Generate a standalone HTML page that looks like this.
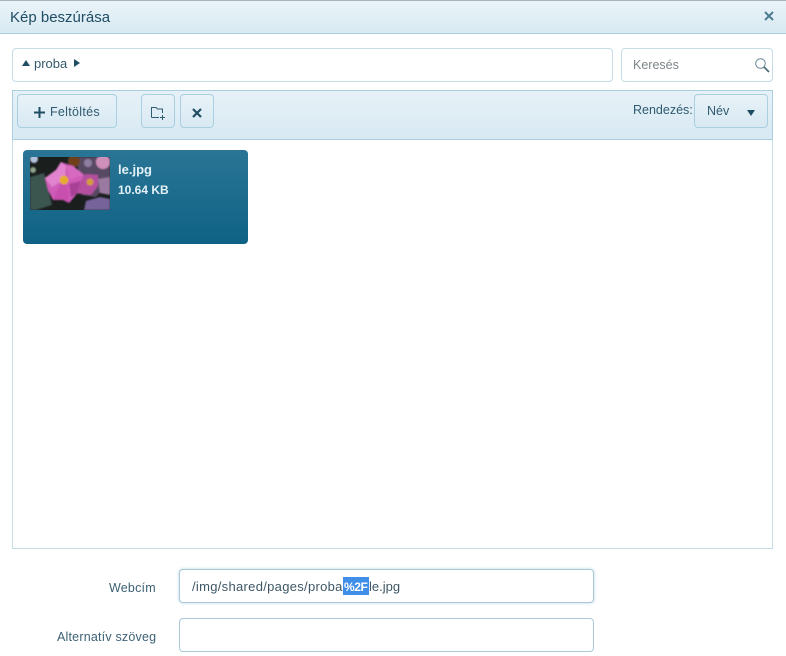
<!DOCTYPE html>
<html><head><meta charset="utf-8"><style>
html,body{margin:0;padding:0;background:#fff}
body{width:786px;height:656px;position:relative;overflow:hidden;font-family:"Liberation Sans",sans-serif;color:#2a4f63}
.a{position:absolute;box-sizing:border-box}
.t{position:absolute;white-space:nowrap;line-height:16px}
.btn{position:absolute;box-sizing:border-box;border:1px solid #a9cfe0;border-radius:4px;background:linear-gradient(#e8f2f8,#d8e9f2)}
.inp{position:absolute;box-sizing:border-box;border:1px solid #c6dde8;border-radius:4px;background:#fff}
</style></head><body>
<div class="a" style="left:0;top:0;width:786px;height:34px;background:linear-gradient(#e9f3f8,#d9eaf3);border-top:1px solid #a9b4ba;border-bottom:1px solid #a9cfe0"></div>
<div class="t" style="left:10px;top:10px;font-size:15px;color:#1f4d63">Kép beszúrása</div>
<svg class="a" style="left:764px;top:11px" width="10" height="10" viewBox="0 0 10 10"><path d="M1 1L9 9M9 1L1 9" stroke="#4f7d92" stroke-width="2"/></svg>

<div class="inp" style="left:12px;top:48px;width:601px;height:34px"></div>
<svg class="a" style="left:22px;top:60px" width="8" height="6"><path d="M0 6L4 0L8 6Z" fill="#1f4d63"/></svg>
<div class="t" style="left:34px;top:56px;font-size:13px;color:#335a6e">proba</div>
<svg class="a" style="left:74px;top:59px" width="6" height="8"><path d="M0 0L6 4L0 8Z" fill="#1f4d63"/></svg>

<div class="inp" style="left:621px;top:48px;width:152px;height:34px"></div>
<div class="t" style="left:633px;top:57px;font-size:12.5px;color:#7d8488">Keresés</div>
<svg class="a" style="left:754px;top:57px" width="16" height="16" viewBox="0 0 16 16"><circle cx="6.5" cy="6.5" r="4.8" fill="none" stroke="#6f8a98" stroke-width="1"/><path d="M10 10L15 15" stroke="#47687a" stroke-width="1.6"/></svg>

<div class="a" style="left:12px;top:90px;width:761px;height:459px;border:1px solid #c6dde8;background:#fff"></div>
<div class="a" style="left:12px;top:90px;width:761px;height:50px;background:linear-gradient(#e6f1f7,#d8e9f3);border:1px solid #a9cfe0"></div>

<div class="btn" style="left:17px;top:94px;width:100px;height:34px"></div>
<svg class="a" style="left:34px;top:107px" width="11" height="11"><path d="M5.5 0V11M0 5.5H11" stroke="#1f4d63" stroke-width="2"/></svg>
<div class="t" style="left:50px;top:104px;font-size:12.5px;color:#2f5a70;letter-spacing:.3px">Feltöltés</div>

<div class="btn" style="left:141px;top:94px;width:34px;height:34px"></div>
<svg class="a" style="left:151px;top:106px" width="15" height="14" viewBox="0 0 15 14"><path d="M.5 11.5V1.5H5L6.5 3H11.5V7M.5 11.5H8" fill="none" stroke="#2f5a70" stroke-width="1"/><path d="M11.5 9V14M9 11.5H14" stroke="#2f5a70" stroke-width="1"/></svg>
<div class="btn" style="left:180px;top:94px;width:34px;height:34px"></div>
<svg class="a" style="left:192px;top:108px" width="10" height="10" viewBox="0 0 10 10"><path d="M1 1L9 9M9 1L1 9" stroke="#1f4d63" stroke-width="2.2"/></svg>

<div class="t" style="left:633px;top:102px;font-size:12.5px;color:#2f5a70">Rendezés:</div>
<div class="btn" style="left:694px;top:94px;width:74px;height:34px"></div>
<div class="t" style="left:707px;top:103px;font-size:12.5px;color:#2f5a70">Név</div>
<svg class="a" style="left:747px;top:110px" width="8" height="6"><path d="M0 0L8 0L4 6Z" fill="#1f4d63"/></svg>

<div class="a" style="left:23px;top:150px;width:225px;height:94px;border-radius:4px;background:linear-gradient(#2a7596,#0f6285)"></div>
<svg class="a" style="left:30px;top:157px" width="80" height="53" viewBox="0 0 80 53">
<defs><filter id="b" x="-20%" y="-20%" width="140%" height="140%"><feGaussianBlur stdDeviation=".9"/></filter><clipPath id="c"><rect width="80" height="53"/></clipPath></defs>
<rect width="80" height="53" fill="#1a1e1d"/>
<g clip-path="url(#c)"><g filter="url(#b)">
<path d="M0 20L14 16L22 48L6 53H0Z" fill="#3a5450"/>
<path d="M46 0H80V24L66 40L52 38Z" fill="#584864"/>
<circle cx="44" cy="4" r="6" fill="#70401f"/>
<circle cx="4" cy="2" r="4" fill="#b4c2de"/>
<circle cx="3" cy="13" r="3" fill="#8fa28a"/>
<circle cx="73" cy="5" r="7" fill="#cf8fbb"/>
<circle cx="58" cy="6" r="4" fill="#8e7fa0"/>
<path d="M56 44L70 40L80 42V53H54Z" fill="#75649a"/>
<path d="M68 22L80 20V38L70 36Z" fill="#9a7aa0"/>
<path d="M43 36L50 22L56 17L68 18L68 29L61 38Z" fill="#b4509f"/>
<path d="M31 5L43 9L54 18L51 24L46 38L39 46L33 43L23 43L18 33L15 21L26 13Z" fill="#cf5cb7"/>
<path d="M26 13L31 5L36 9L35 22L22 30L15 21Z" fill="#e283cf"/>
<path d="M36 9L43 9L54 18L40 22Z" fill="#d76bc0"/>
<path d="M30 27L38 28L39 46L33 43L23 43Z" fill="#c84fae"/>
<path d="M39 27L51 24L46 38L41 40Z" fill="#a83f96"/>
<circle cx="34" cy="23" r="4.5" fill="#e6ad2a"/>
<circle cx="60" cy="25" r="3.5" fill="#d49a3c"/>
</g></g></svg>
<div class="t" style="left:118px;top:162px;font-size:13px;font-weight:bold;color:#e3f1f7">le.jpg</div>
<div class="t" style="left:118px;top:182px;font-size:12px;font-weight:bold;color:#e3f1f7">10.64 KB</div>

<div class="t" style="left:109px;top:580px;font-size:12.5px;color:#3d6175;letter-spacing:.2px">Webcím</div>
<div class="t" style="left:57px;top:629px;font-size:12.5px;color:#3d6175;letter-spacing:.2px">Alternatív szöveg</div>

<div class="inp" style="left:179px;top:569px;width:415px;height:34px;border-color:#a9c9d8;box-shadow:0 0 3px #b8d3df"></div>
<div class="a" style="left:343px;top:577px;width:26px;height:18px;background:#3f8ee8"></div>
<div class="t" style="left:192px;top:579px;font-size:13px;color:#3d5766;letter-spacing:.3px">/img/shared/pages/proba</div>
<div class="t" style="left:344px;top:579px;font-size:12px;color:#fff;font-weight:bold;letter-spacing:-.4px">%2F</div>
<div class="t" style="left:369px;top:579px;font-size:13px;color:#3d5766">le.jpg</div>
<div class="inp" style="left:179px;top:618px;width:415px;height:34px;border-color:#a9c9d8"></div>
</body></html>
